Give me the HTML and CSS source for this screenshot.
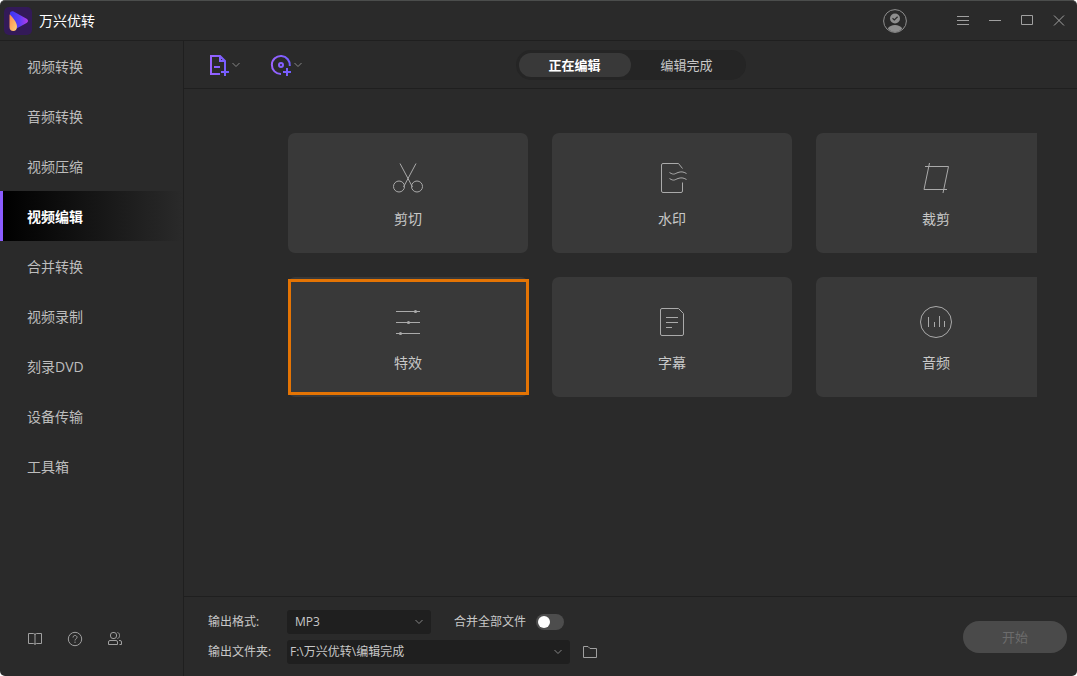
FILE: index.html
```html
<!DOCTYPE html>
<html lang="zh-CN">
<head>
  <meta charset="UTF-8">
  <title>万兴优转</title>
  <link rel="stylesheet" href="styles.css">
</head>
<body>
  <div class="window">
    <header class="titlebar">
      <svg class="logo" viewBox="0 0 28 28" aria-hidden="true">
        <defs>
          <linearGradient id="logoPlay" x1="0" y1="0" x2="1" y2="0">
            <stop offset="0" stop-color="#3d35f0"/>
            <stop offset="0.5" stop-color="#5a3cf8"/>
            <stop offset="1" stop-color="#b53ce8"/>
          </linearGradient>
          <linearGradient id="logoDrop" x1="0" y1="0" x2="1" y2="1">
            <stop offset="0" stop-color="#ff8a4c"/>
            <stop offset="1" stop-color="#ffd27a"/>
          </linearGradient>
        </defs>
        <rect width="28" height="28" rx="5" fill="#331a58"/>
        <path d="M6 6.5C6 4.5 7.8 3.7 9.6 4.6L22.6 11.8C24.5 12.9 24.5 15 22.6 16L12.5 21.5L6 8Z" fill="url(#logoPlay)"/>
        <path d="M6 7.5C8.5 10.5 13 15 13 19.5C13 22.5 11.5 24 9.3 24C7 24 5.5 22.4 5.5 20V8Q5.500 7.300 6 7.500Z" fill="url(#logoDrop)"/>
      </svg>
      <h1 class="app-name">万兴优转</h1>
      <button class="avatar" aria-label="账户">
        <svg width="24" height="24" viewBox="0 0 24 24">
          <circle cx="12" cy="12" r="11.4" fill="none" stroke="#8e8e8e"/>
          <circle cx="12" cy="9.500" r="5" fill="#8e8e8e"/>
          <path d="M4.800 19.500C7 14.800 17 14.800 19.200 19.500C15.500 24.200 8.500 24.200 4.800 19.500Z" fill="#8e8e8e"/>
          <path d="M9.500 9.300L11.300 11L14.600 7.800" fill="none" stroke="#2a2a2a" stroke-width="1.200"/>
        </svg>
      </button>
      <div class="window-buttons">
        <button aria-label="菜单">
          <svg width="12" height="12" viewBox="0 0 12 12"><path d="M0 1.500H12M0 5.500H12M0 9.500H12"/></svg>
        </button>
        <button aria-label="最小化">
          <svg width="12" height="12" viewBox="0 0 12 12"><path d="M0 5.500H12"/></svg>
        </button>
        <button aria-label="最大化">
          <svg width="12" height="12" viewBox="0 0 12 12"><path d="M0.500 0.500H11.500V9.500H0.500Z"/></svg>
        </button>
        <button aria-label="关闭">
          <svg width="12" height="12" viewBox="0 0 12 12"><path d="M1 0.500L11 10.500M11 0.500L1 10.500"/></svg>
        </button>
      </div>
    </header>

    <aside class="sidebar">
      <nav class="menu">
        <a href="#">视频转换</a>
        <a href="#">音频转换</a>
        <a href="#">视频压缩</a>
        <a href="#" class="active" aria-current="page">视频编辑</a>
        <a href="#">合并转换</a>
        <a href="#">视频录制</a>
        <a href="#">刻录DVD</a>
        <a href="#">设备传输</a>
        <a href="#">工具箱</a>
      </nav>
      <div class="sidebar-tools">
        <button aria-label="使用指南">
          <svg width="16" height="16" viewBox="0 0 16 16"><path d="M1.500 2.500H6.500Q8 2.500 8 4V13.500M14.500 2.500H9.500Q8 2.500 8 4M1.500 2.500V12.500H6.500Q8 12.500 8 13.500Q8 12.500 9.500 12.500H14.500V2.500"/></svg>
        </button>
        <button aria-label="帮助">
          <svg width="16" height="16" viewBox="0 0 16 16"><circle cx="8" cy="8" r="6.700"/><path d="M6 6.500C6 3.800 10 3.800 10 6.400C10 7.800 8 7.800 8 9.500M8 10.600V11.900"/></svg>
        </button>
        <button aria-label="社区">
          <svg width="16" height="16" viewBox="0 0 16 16"><rect x="3.500" y="1.500" width="6" height="6" rx="2.500"/><path d="M10.500 1.500C13.200 1.800 13.200 7.200 10.500 7.500M1.500 13.500V11Q1.500 9.500 3 9.500H9Q10.500 9.500 10.500 11V13.500ZM12 9.500H13Q14.500 9.500 14.500 11V13.500H12.500"/></svg>
        </button>
      </div>
    </aside>

    <main class="main">
      <div class="toolbar">
        <div class="add-buttons">
          <button aria-label="添加文件">
            <svg width="22" height="22" viewBox="0 0 22 22">
              <defs>
                <linearGradient id="purple" gradientUnits="userSpaceOnUse" x1="2" y1="0" x2="21" y2="0">
                  <stop offset="0" stop-color="#9a63ff"/>
                  <stop offset="1" stop-color="#6f5cff"/>
                </linearGradient>
              </defs>
              <path d="M12 20H3V2H12L17 7V14M12 2V7H17M6 13H12M17 14V22M13 18H21" fill="none" stroke="url(#purple)" stroke-width="2"/>
            </svg>
            <svg class="chevron" width="8" height="6" viewBox="0 0 8 6"><path d="M0.500 1L4 4.500L7.500 1"/></svg>
          </button>
          <button aria-label="从设备添加">
            <svg width="22" height="22" viewBox="0 0 22 22">
              <path d="M11 20A9 9 0 1 1 19.800 12M17 14V22M13 18H21" fill="none" stroke="url(#purple)" stroke-width="2"/>
              <circle cx="11" cy="11" r="2" fill="none" stroke="url(#purple)" stroke-width="2"/>
            </svg>
            <svg class="chevron" width="8" height="6" viewBox="0 0 8 6"><path d="M0.500 1L4 4.500L7.500 1"/></svg>
          </button>
        </div>
        <div class="tabs">
          <button class="active">正在编辑</button>
          <button>编辑完成</button>
        </div>
      </div>

      <div class="content">
        <div class="cards">
          <button class="card">
            <svg width="32" height="32" viewBox="0 0 32 32"><path d="M8 1.500L20.500 25M24 1.500L11.500 25"/><circle cx="7" cy="24.500" r="5.500"/><circle cx="25" cy="24.500" r="5.500"/></svg>
            <span>剪切</span>
          </button>
          <button class="card">
            <svg width="32" height="32" viewBox="0 0 32 32"><path d="M26.500 6.500L22.500 1.500H7Q5.500 1.500 5.500 3V29Q5.500 30.500 7 30.500H25Q26.500 30.500 26.500 29V20.500M13.500 10.500C18 13.500 19 11.500 22 10.500S27 9.500 30.500 11.500M13.500 16.500C18 19.500 19 17.500 22 16.500S27 15.500 30.500 17.500"/></svg>
            <span>水印</span>
          </button>
          <button class="card">
            <svg width="32" height="32" viewBox="0 0 32 32"><path d="M5 4.500H28.500L23 31M9.500 1L4 27.500H27"/></svg>
            <span>裁剪</span>
          </button>
          <button class="card selected">
            <svg width="32" height="32" viewBox="0 0 32 32"><path d="M4 5.500H28M4 16.500H28M4 27.500H28"/><g class="dots"><circle cx="23.500" cy="5.500" r="1.600"/><circle cx="16.500" cy="16.500" r="1.600"/><circle cx="8.500" cy="27.500" r="1.600"/></g></svg>
            <span>特效</span>
          </button>
          <button class="card">
            <svg width="32" height="32" viewBox="0 0 32 32"><path d="M6 2.500H22.500L27.500 7.500V28Q27.500 29.500 26 29.500H6Q4.500 29.500 4.500 28V4Q4.500 2.500 6 2.500ZM10 11.500H22M10 16.500H22M10 21.500H16"/></svg>
            <span>字幕</span>
          </button>
          <button class="card">
            <svg width="32" height="32" viewBox="0 0 32 32"><circle cx="16" cy="16" r="15.500"/><path d="M8.500 11V21M14.500 16V21M19.500 10V21M24.500 15V21"/></svg>
            <span>音频</span>
          </button>
        </div>
      </div>

      <footer class="output">
        <div class="fields">
          <div class="row">
            <label class="field-label" for="format">输出格式:</label>
            <div class="select format">
              <select id="format">
                <option>MP3</option>
              </select>
              <svg class="chevron" width="8" height="6" viewBox="0 0 8 6"><path d="M0.500 1L4 4.500L7.500 1"/></svg>
            </div>
            <label class="merge" for="merge">合并全部文件</label>
            <input class="switch" type="checkbox" role="switch" id="merge">
          </div>
          <div class="row">
            <label class="field-label" for="folder">输出文件夹:</label>
            <div class="select folder">
              <select id="folder">
                <option>F:\万兴优转\编辑完成</option>
              </select>
              <svg class="chevron" width="8" height="6" viewBox="0 0 8 6"><path d="M0.500 1L4 4.500L7.500 1"/></svg>
            </div>
            <button class="open-folder" aria-label="打开文件夹">
              <svg width="16" height="16" viewBox="0 0 16 16"><path d="M1.500 13.500V2.500H6L8 4.500H14.500V13.500Z"/></svg>
            </button>
          </div>
        </div>
        <button class="start" disabled>开始</button>
      </footer>
    </main>
  </div>
</body>
</html>
```
FILE: styles.css
```css
* {
  box-sizing: border-box;
}

body {
  margin: 0;
  background: #fff;
  color: #c8c8c8;
  font-family: "Open Sans", "Noto Sans CJK SC", sans-serif;
  font-size: 14px;
  line-height: 20px;
}

button,
select {
  padding: 0;
  border: 0;
  background: none;
  color: inherit;
  font: inherit;
  cursor: pointer;
}

svg {
  display: block;
  flex: none;
}

.window {
  display: grid;
  grid-template-columns: 184px 1fr;
  grid-template-rows: 40px 1fr;
  height: 100vh;
  border-top: 1px solid #4b4d4c;
  border-radius: 5px;
  background: #2a2a2a;
  overflow: hidden;
}

/* title bar */
.titlebar {
  grid-column: 1 / -1;
  display: flex;
  align-items: center;
  padding: 0 2px 0 4px;
  border-bottom: 1px solid #1f1f1f;
}

.logo {
  width: 28px;
  height: 28px;
}

.app-name {
  margin: 0 auto 0 7px;
  color: #fff;
  font-size: 14px;
  font-weight: 400;
}

.avatar {
  margin-right: 40px;
}

.window-buttons {
  display: flex;
}

.window-buttons button {
  display: flex;
  align-items: center;
  justify-content: center;
  width: 32px;
  height: 32px;
}

.window-buttons svg {
  fill: none;
  stroke: #a0a0a0;
}

/* sidebar */
.sidebar {
  display: flex;
  flex-direction: column;
  justify-content: space-between;
  border-right: 1px solid #1f1f1f;
}

.menu a {
  display: flex;
  align-items: center;
  height: 50px;
  padding: 2px 0 0 24px;
  border-left: 3px solid transparent;
  color: #bdbdbd;
  text-decoration: none;
}

.menu a.active {
  border-left-color: #8b5cff;
  background: linear-gradient(to right, #000, #2a2a2a);
  color: #fff;
  font-weight: 700;
}

.sidebar-tools {
  display: flex;
  gap: 24px;
  padding: 0 27px 29px;
}

.sidebar-tools svg,
.open-folder svg {
  fill: none;
  stroke: #a0a0a0;
}

/* main area */
.main {
  display: flex;
  flex-direction: column;
  min-width: 0;
}

.toolbar {
  display: grid;
  grid-template-columns: 1fr auto 1fr;
  align-items: center;
  height: 48px;
  padding: 0 24px;
  border-bottom: 1px solid #1f1f1f;
}

.add-buttons {
  display: flex;
  gap: 30px;
}

.add-buttons button {
  display: flex;
  align-items: center;
  gap: 2px;
}

.chevron {
  fill: none;
  stroke: #858585;
}

.tabs {
  display: flex;
  padding: 3px;
  border-radius: 15px;
  background: #252525;
}

.tabs button {
  width: 112px;
  height: 24px;
  border-radius: 12px;
  font-size: 13px;
}

.tabs .active {
  background: #393939;
  color: #fff;
  font-weight: 700;
}

.content {
  flex: 1;
  margin: 0 40px 0 104px;
  padding-top: 44px;
  overflow: hidden;
}

.cards {
  display: grid;
  grid-template-columns: repeat(3, 240px);
  gap: 24px;
}

.card {
  display: flex;
  flex-direction: column;
  align-items: center;
  gap: 15px;
  height: 120px;
  padding-top: 29px;
  border-radius: 7px;
  background: #393939;
}

.card svg {
  fill: none;
  stroke: #aaa;
}

.card .dots {
  fill: #aaa;
  stroke: none;
}

.selected {
  position: relative;
}

.selected::after {
  content: "";
  position: absolute;
  inset: 2px -1px 2px 0;
  border: 3px solid #e47404;
}

/* output settings */
.output {
  display: flex;
  align-items: center;
  justify-content: space-between;
  height: 80px;
  padding: 0 10px 0 24px;
  border-top: 1px solid #1f1f1f;
  font-size: 12px;
}

.fields {
  display: flex;
  flex-direction: column;
  gap: 6px;
}

.row {
  display: flex;
  align-items: center;
}

.field-label {
  width: 79px;
}

.select {
  position: relative;
}

.select select {
  display: block;
  width: 100%;
  height: 24px;
  border-radius: 3px;
  background: #1f1f1f;
  appearance: none;
}

.select .chevron {
  position: absolute;
  top: 9px;
  right: 8px;
  pointer-events: none;
}

.format {
  width: 144px;
}

.format select {
  padding-left: 8px;
}

.folder {
  width: 283px;
}

.folder select {
  padding-left: 3px;
}

.merge {
  margin-left: 23px;
}

.switch {
  width: 28px;
  height: 16px;
  margin: 0 0 0 10px;
  padding: 2px;
  border-radius: 8px;
  background: #4d4d4d;
  appearance: none;
  cursor: pointer;
}

.switch::before {
  content: "";
  display: block;
  width: 12px;
  height: 12px;
  border-radius: 50%;
  background: #fff;
}

.switch:checked {
  background: #8b5cff;
}

.switch:checked::before {
  margin-left: auto;
}

.open-folder {
  margin-left: 12px;
}

.start {
  width: 104px;
  height: 32px;
  border-radius: 16px;
  background: #4a4a4a;
  color: #6c6c6c;
  font-size: 13px;
}
```
